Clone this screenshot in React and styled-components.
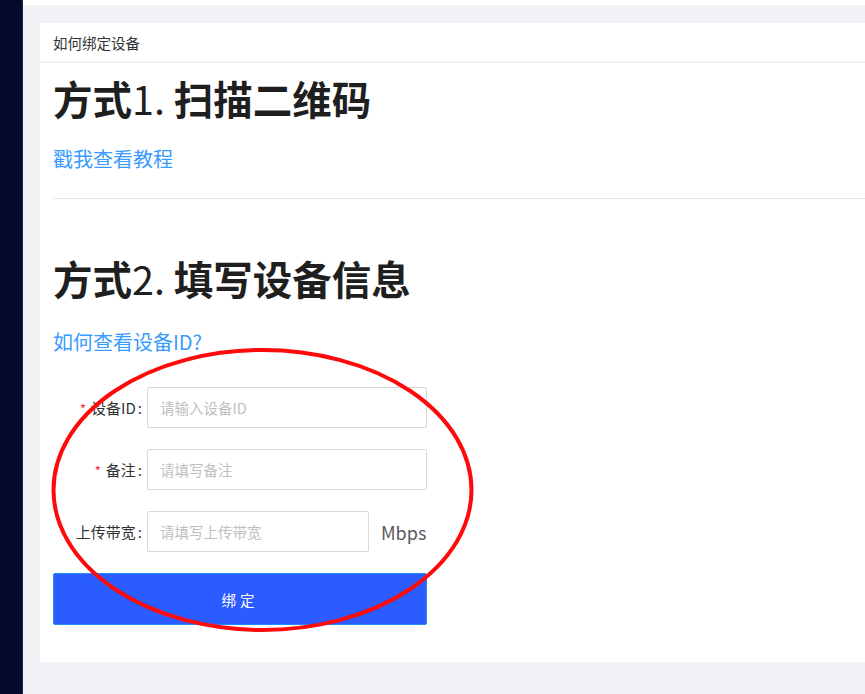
import styled, { createGlobalStyle } from "styled-components"

const GlobalStyle = createGlobalStyle`
html, body {
    margin: 0;
    padding: 0;
    background: #f0f2f5;
    overflow: hidden;
}
body {
    font-family: "Noto Sans CJK SC", "Noto Sans", sans-serif;
    color: #333;
}
* { box-sizing: border-box; }
`;

const Page = styled.div`
position: relative;
display: flex;
width: 865px;
height: 694px;
`;

const Sidebar = styled.div`
width: 23px;
flex-shrink: 0;
background: #030a2c;
border-right: 1px solid #1f2640;
`;

const Main = styled.div`
flex: 1;
display: flex;
flex-direction: column;
`;

const TopBar = styled.div`
height: 5px;
background: #fff;
`;

const Content = styled.div`
padding: 18px 0 0 17px;
`;

const Card = styled.div`
background: #fff;
height: 639px;
`;

const CardHead = styled.div`
height: 40px;
padding: 0 13px;
display: flex;
align-items: center;
font-size: 14.5px;
color: #333;
border-bottom: 2px solid #f2f2f3;
`;

const CardBody = styled.div`
padding: 0 0 0 13px;
`;

const Title = styled.h1`
margin: ${p => p.$top}px 0 0;
font-size: 39.5px;
line-height: 48px;
font-weight: 700;
color: #1f1f1f;
span {
    font-weight: 400;
}
`;

const Link = styled.a`
display: block;
margin-top: ${p => p.$top}px;
font-size: 20px;
line-height: 28px;
color: #3a9bff;
text-decoration: none;
`;

const Divider = styled.div`
margin: 25px 0 0;
height: 1px;
background: #e8e8e8;
`;

const Form = styled.div`
margin-top: 31px;
display: flex;
flex-direction: column;
gap: 21px;
width: 374px;
`;

const Row = styled.div`
display: flex;
align-items: center;
`;

const Label = styled.label`
width: 94px;
padding-right: 5px;
text-align: right;
font-size: 15px;
color: #333;
white-space: nowrap;
&::after {
    content: ":";
    margin-left: 2px;
}
`;

const Star = styled.span`
color: #f5222d;
margin-right: 5px;
font-size: 13px;
`;

const Input = styled.input`
width: ${p => p.$w}px;
height: 41px;
padding: 0 12px;
border: 1px solid #d9d9d9;
border-radius: 2px;
font-family: inherit;
font-size: 14.5px;
color: #333;
outline: none;
&::placeholder {
    color: #bfbfbf;
}
`;

const Unit = styled.span`
margin-left: 12px;
font-size: 18px;
color: #595959;
`;

const Button = styled.button`
height: 52px;
width: 374px;
border: 1px solid #1c8cff;
border-radius: 2px;
background: #2b5cff;
color: #fff;
font-family: inherit;
font-size: 14.5px;
letter-spacing: 4px;
cursor: pointer;
`;

const Mark = styled.svg`
position: absolute;
left: 0;
top: 0;
pointer-events: none;
`;

const App = () => {
    return (
        <>
            <GlobalStyle />
            <Page>
                <Sidebar />
                <Main>
                    <TopBar />
                    <Content>
                        <Card>
                            <CardHead>如何绑定设备</CardHead>
                            <CardBody>
                                <Title $top={11}>方式<span>1. </span>扫描二维码</Title>
                                <Link $top={23} href="#">戳我查看教程</Link>
                                <Divider />

                                <Title $top={55}>方式<span>2. </span>填写设备信息</Title>
                                <Link $top={26} href="#">如何查看设备ID?</Link>

                                <Form>
                                    <Row>
                                        <Label><Star>*</Star>设备ID</Label>
                                        <Input $w={280} placeholder="请输入设备ID" />
                                    </Row>
                                    <Row>
                                        <Label><Star>*</Star>备注</Label>
                                        <Input $w={280} placeholder="请填写备注" />
                                    </Row>
                                    <Row>
                                        <Label>上传带宽</Label>
                                        <Input $w={222} placeholder="请填写上传带宽" />
                                        <Unit>Mbps</Unit>
                                    </Row>
                                    <Button>绑定</Button>
                                </Form>
                            </CardBody>
                        </Card>
                    </Content>
                </Main>

                {/* hand-drawn annotation circle */}
                <Mark width="865" height="694" viewBox="0 0 865 694">
                    <ellipse cx="262.5" cy="490" rx="209" ry="140" fill="none" stroke="#ff0a0a" strokeWidth="4" />
                </Mark>
            </Page>
        </>
    )
}
export default App
